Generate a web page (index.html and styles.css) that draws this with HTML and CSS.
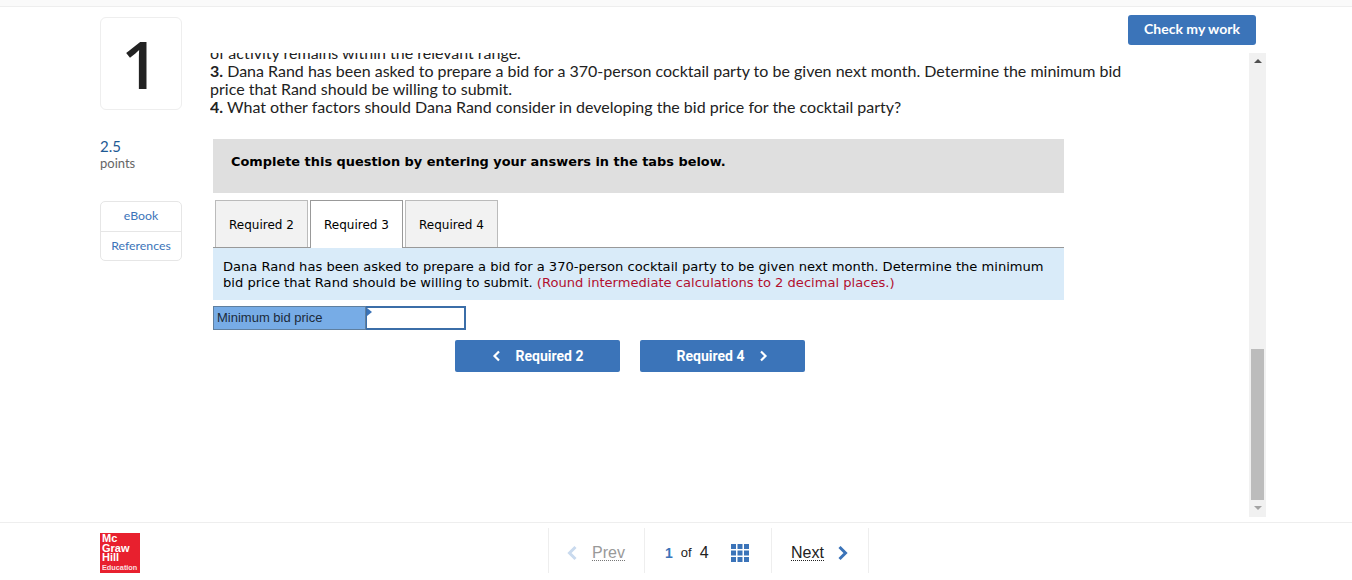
FILE: index.html
```html
<!DOCTYPE html>
<html lang="en">
<head>
    <meta charset="UTF-8">
    <title>Question 1</title>
    <link rel="stylesheet" href="styles.css">
</head>
<body>
    <div class="top-strip"></div>
    <div class="main">
        <div class="sidebar">
            <div class="number-box">1</div>
            <div class="points-value">2.5</div>
            <div class="points-label">points</div>
            <div class="links">
                <a class="link">eBook</a>
                <a class="link">References</a>
            </div>
        </div>
        <div class="work">
            <div class="toolbar">
                <button class="check-btn">Check my work</button>
            </div>
            <div class="pane">
                <div class="scroller">
                    <div class="question">
                        <div>of activity remains within the relevant range.</div>
                        <div><b>3.</b> Dana Rand has been asked to prepare a bid for a 370-person cocktail party to be given next month. Determine the minimum bid price that Rand should be willing to submit.</div>
                        <div><b>4.</b> What other factors should Dana Rand consider in developing the bid price for the cocktail party?</div>
                    </div>
                    <div class="widget">
                        <div class="instruction">Complete this question by entering your answers in the tabs below.</div>
                        <div class="tabs">
                            <div class="tab">Required 2</div>
                            <div class="tab active">Required 3</div>
                            <div class="tab">Required 4</div>
                        </div>
                        <div class="prompt">Dana Rand has been asked to prepare a bid for a 370-person cocktail party to be given next month. Determine the minimum bid price that Rand should be willing to submit. <span class="hint">(Round intermediate calculations to 2 decimal places.)</span></div>
                        <div class="answer">
                            <div class="answer-label">Minimum bid price</div>
                            <div class="answer-input"></div>
                        </div>
                        <div class="tab-nav">
                            <button class="nav-btn">
                                <svg width="9" height="12" viewBox="0 0 9 12"><path d="M7 1.500 2.500 6 7 10.500" fill="none" stroke="#fff" stroke-width="2.200"/></svg>
                                Required 2
                            </button>
                            <button class="nav-btn">
                                Required 4
                                <svg width="9" height="12" viewBox="0 0 9 12"><path d="M2 1.500 6.500 6 2 10.500" fill="none" stroke="#fff" stroke-width="2.200"/></svg>
                            </button>
                        </div>
                    </div>
                </div>
                <div class="scrollbar">
                    <div class="arrow-up"></div>
                    <div class="thumb"></div>
                    <div class="arrow-down"></div>
                </div>
            </div>
        </div>
    </div>
    <div class="footer">
        <div class="logo">
            <span>Mc</span>
            <span>Graw</span>
            <span>Hill</span>
            <span class="logo-small">Education</span>
        </div>
        <div class="pager">
            <div class="pager-cell prev">
                <svg width="12" height="16" viewBox="0 0 12 16"><path d="M9.500 2 3.500 8l6 6" fill="none" stroke="#c9daee" stroke-width="3"/></svg>
                <span class="dotted">Prev</span>
            </div>
            <div class="pager-cell count">
                <b>1</b><span class="of">of</span><span class="total">4</span>
                <svg class="grid-icon" width="18" height="18" viewBox="0 0 18 18" fill="#3b74b9">
                    <rect width="5" height="5"/><rect x="6.500" width="5" height="5"/><rect x="13" width="5" height="5"/>
                    <rect y="6.500" width="5" height="5"/><rect x="6.500" y="6.500" width="5" height="5"/><rect x="13" y="6.500" width="5" height="5"/>
                    <rect y="13" width="5" height="5"/><rect x="6.500" y="13" width="5" height="5"/><rect x="13" y="13" width="5" height="5"/>
                </svg>
            </div>
            <div class="pager-cell next">
                <span class="dotted">Next</span>
                <svg width="12" height="16" viewBox="0 0 12 16"><path d="M2.500 2l6 6-6 6" fill="none" stroke="#3b74b9" stroke-width="3"/></svg>
            </div>
        </div>
    </div>
</body>
</html>
```

FILE: styles.css
```css
html, body {
    margin: 0;
    height: 580px;
    overflow: hidden;
    background-color: #fff;
}
body {
    font-family: "Lato", Arial, sans-serif;
    color: #222;
}
button {
    border: none;
    cursor: pointer;
}
.top-strip {
    height: 6px;
    background-color: #fafafa;
    border-bottom: 1px solid #eee;
}
.main {
    display: flex;
    height: 515px;
    padding-left: 100px;
}
.sidebar {
    width: 82px;
    padding-top: 10px;
    flex-shrink: 0;
}
.number-box {
    height: 91px;
    padding-right: 2px;
    border: 1px solid #eee;
    border-radius: 6px;
    text-align: center;
    font-family: "Open Sans", Arial, sans-serif;
    font-size: 66px;
    font-weight: 600;
    line-height: 90px;
    color: #222;
}
.points-value {
    margin-top: 27px;
    font-size: 15px;
    line-height: 18px;
    color: #1f5a94;
}
.points-label {
    font-size: 13px;
    line-height: 16px;
    color: #666;
}
.links {
    margin-top: 30px;
    border: 1px solid #e6e6e6;
    border-radius: 5px;
}
.link {
    display: block;
    height: 29px;
    line-height: 28px;
    text-align: center;
    font-size: 12.300px;
    color: #3b74b9;
}
.link + .link {
    height: 28px;
    border-top: 1px solid #e6e6e6;
}
.work {
    margin-left: 28px;
    width: 1056px;
}
.toolbar {
    display: flex;
    justify-content: flex-end;
    height: 46px;
    padding: 8px 10px 0 0;
    box-sizing: border-box;
}
.check-btn {
    width: 128px;
    height: 30px;
    padding: 0 0 3px;
    border-radius: 3px;
    background-color: #3b74b9;
    color: #fff;
    font-family: "Lato", Arial, sans-serif;
    font-size: 14px;
    font-weight: bold;
}
.pane {
    display: flex;
    height: 464px;
}
.scroller {
    width: 1039px;
    overflow: hidden;
}
.question {
    width: 920px;
    margin-top: -9px;
    font-size: 16px;
    line-height: 18px;
}
.widget {
    width: 851px;
    margin: 23px 0 0 3px;
    font-family: "DejaVu Sans", Verdana, sans-serif;
    color: #000;
}
.instruction {
    height: 54px;
    padding: 15px 18px 0;
    box-sizing: border-box;
    background-color: #dfdfdf;
    font-size: 12.920px;
    font-weight: bold;
    line-height: 16px;
}
.tabs {
    display: flex;
    gap: 2px;
    height: 48px;
    margin-top: 7px;
    padding-left: 2px;
    border-bottom: 1px solid #999;
    box-sizing: border-box;
}
.tab {
    width: 93px;
    height: 47px;
    box-sizing: border-box;
    border: 1px solid #bbb;
    border-bottom: none;
    background-color: #f2f2f2;
    font-size: 12px;
    line-height: 48px;
    text-align: center;
}
.tab.active {
    height: 48px;
    border-color: #999;
    background-color: #fff;
}
.prompt {
    height: 52px;
    padding: 11px 10px 0;
    box-sizing: border-box;
    background-color: #d9ebf9;
    font-size: 13.080px;
    line-height: 16px;
}
.hint {
    color: #b2102f;
}
.answer {
    display: flex;
    width: 253px;
    height: 24px;
    margin-top: 6px;
    font-family: "Liberation Sans", Arial, sans-serif;
    font-size: 13px;
}
.answer-label {
    width: 153px;
    box-sizing: border-box;
    padding-left: 3px;
    border: 1px solid #5f7f9f;
    background-color: #77ace6;
    line-height: 22px;
    color: #1b2a3a;
}
.answer-input {
    position: relative;
    flex: 1;
    border: 2px solid #3b6ea8;
    border-left-width: 1px;
    background-color: #fff;
}
.answer-input::before {
    content: "";
    position: absolute;
    left: 0;
    top: 0;
    border-left: 5px solid #3b74b9;
    border-top: 4px solid transparent;
    border-bottom: 4px solid transparent;
}
.tab-nav {
    display: flex;
    justify-content: center;
    gap: 20px;
    width: 834px;
    margin-top: 10px;
}
.nav-btn {
    display: flex;
    align-items: center;
    justify-content: center;
    gap: 15px;
    width: 165px;
    height: 32px;
    border-radius: 2px;
    background-color: #3b74b9;
    color: #fff;
    font-family: "Roboto", Arial, sans-serif;
    font-size: 14px;
    font-weight: bold;
}
.scrollbar {
    display: flex;
    flex-direction: column;
    align-items: center;
    width: 17px;
    background-color: #f1f1f1;
}
.arrow-up {
    margin-top: 6px;
    border-left: 4px solid transparent;
    border-right: 4px solid transparent;
    border-bottom: 4px solid #505050;
}
.thumb {
    width: 13px;
    height: 151px;
    margin-top: auto;
    background-color: #bcbcbc;
}
.arrow-down {
    margin: 6px 0 7px;
    border-left: 4px solid transparent;
    border-right: 4px solid transparent;
    border-top: 4px solid #a3a3a3;
}
.footer {
    display: flex;
    height: 57px;
    padding-left: 100px;
    border-top: 1px solid #eee;
    box-sizing: border-box;
}
.logo {
    display: flex;
    flex-direction: column;
    justify-content: center;
    width: 40px;
    height: 40px;
    margin-top: 10px;
    padding: 1px 0 0 2px;
    box-sizing: border-box;
    background-color: #e8202e;
    color: #fff;
    font-family: "Liberation Sans", Arial, sans-serif;
    font-size: 11px;
    font-weight: bold;
    line-height: 9.500px;
}
.logo-small {
    font-size: 7.300px;
    line-height: 10px;
    opacity: 0.85;
}
.pager {
    display: flex;
    height: 45px;
    margin: 5px 0 0 408px;
    border-left: 1px solid #eee;
    font-family: "Liberation Sans", Arial, sans-serif;
    font-size: 16px;
}
.pager-cell {
    display: flex;
    align-items: center;
    box-sizing: border-box;
    padding-top: 4px;
    border-right: 1px solid #eee;
}
.prev {
    width: 96px;
    padding-left: 17px;
    gap: 14px;
    color: #999;
}
.count {
    width: 127px;
    padding-left: 20px;
    color: #222;
}
.count b {
    font-size: 14px;
    color: #3b74b9;
}
.of {
    margin-left: 8px;
    font-size: 13px;
}
.total {
    margin-left: 8px;
    font-size: 16px;
}
.grid-icon {
    margin-left: 22px;
}
.next {
    width: 97px;
    padding-left: 19px;
    gap: 13px;
    color: #222;
}
.dotted {
    border-bottom: 1px dotted #777;
    line-height: 15px;
}
.next .dotted {
    border-bottom-color: #222;
}
```
